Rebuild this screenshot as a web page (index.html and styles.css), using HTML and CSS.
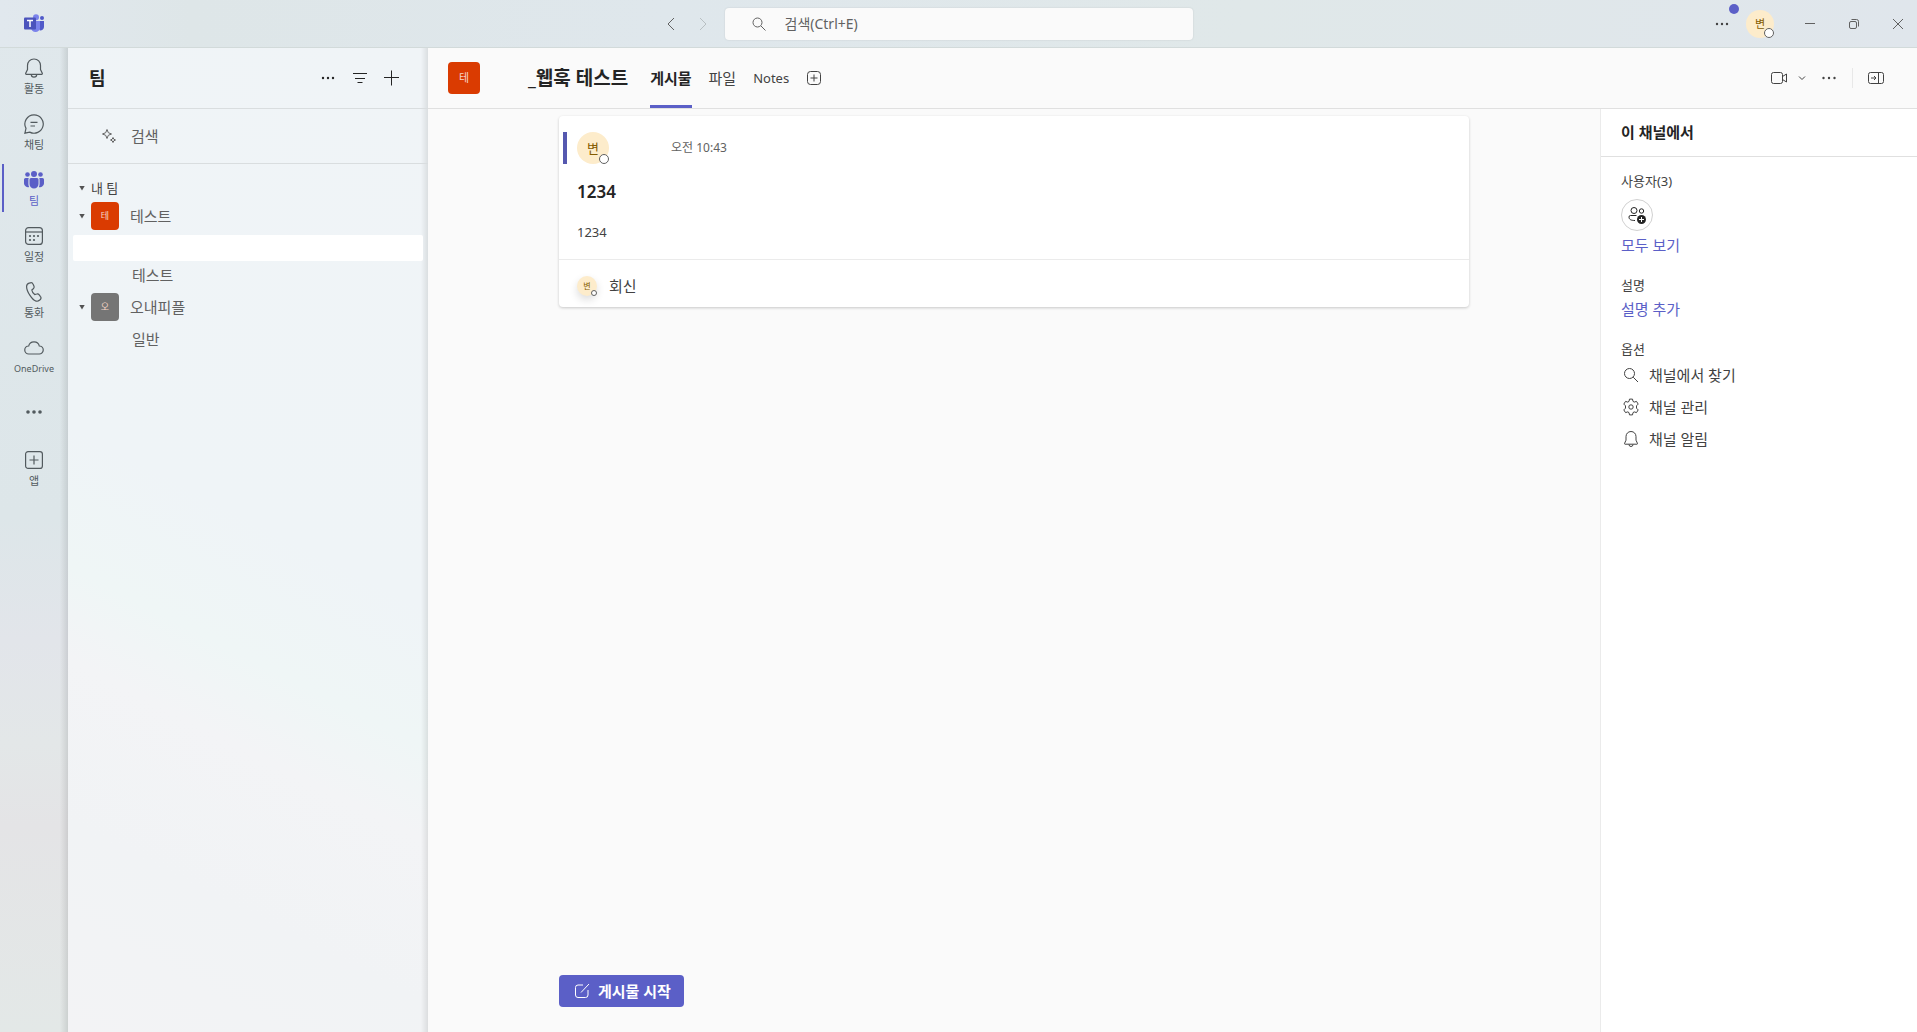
FILE: index.html
```html
<!DOCTYPE html>
<html lang="ko">
<head>
  <meta charset="UTF-8">
  <meta name="viewport" content="width=device-width, initial-scale=1.0">
  <title>_웹훅 테스트</title>
  <link rel="stylesheet" href="styles.css">
</head>
<body>
  <div class="app">
    <header class="titlebar">
      <div class="titlebar-left">
        <svg class="logo" width="20" height="20" viewBox="0 0 20 20">
          <circle cx="18" cy="4" r="2" fill="#5059c9"/>
          <path d="M14 7h6v6a3.500 3.500 0 0 1-4.500 3.300z" fill="#5059c9"/>
          <circle cx="12" cy="3.200" r="3" fill="#7b83eb"/>
          <path d="M7 7h9v6.500a4.500 4.500 0 0 1-9 0z" fill="#7b83eb"/>
          <rect y="3.500" width="12" height="12" rx="1" fill="#4b53bc"/>
          <path d="M3 6.500h6M6 6.500v6.500" stroke="#fff" stroke-width="1.500" fill="none"/>
        </svg>
        <div class="history">
          <button aria-label="뒤로"><svg width="20" height="20" viewBox="0 0 20 20"><path d="M13 4L7 10l6 6"/></svg></button>
          <button aria-label="앞으로" disabled><svg width="20" height="20" viewBox="0 0 20 20"><path d="M7 4l6 6-6 6"/></svg></button>
        </div>
      </div>
      <label class="search">
        <svg width="20" height="20" viewBox="0 0 20 20"><circle cx="8.500" cy="8.500" r="4.500"/><path d="M12 12l4.500 4.500"/></svg>
        <input type="text" placeholder="검색(Ctrl+E)" aria-label="검색">
      </label>
      <div class="titlebar-right">
        <button class="more" aria-label="설정 및 기타">
          <svg class="fill" width="20" height="20" viewBox="0 0 20 20"><circle cx="5" cy="10" r="1.200"/><circle cx="10" cy="10" r="1.200"/><circle cx="15" cy="10" r="1.200"/></svg>
          <span class="dot"></span>
        </button>
        <button class="person person-28" aria-label="프로필">변<span class="presence"></span></button>
        <div class="window-controls">
          <button aria-label="최소화"><svg width="12" height="12" viewBox="0 0 12 12"><path d="M1 5.500h10"/></svg></button>
          <button aria-label="복원"><svg width="12" height="12" viewBox="0 0 12 12"><rect x="1.500" y="3.500" width="7" height="7" rx="1.500"/><path d="M3.500 1.500h5a2 2 0 0 1 2 2v5"/></svg></button>
          <button aria-label="닫기"><svg width="12" height="12" viewBox="0 0 12 12"><path d="M1 1l10 10M11 1L1 11"/></svg></button>
        </div>
      </div>
    </header>

    <div class="body">
      <nav class="rail">
        <a href="#">
          <svg width="20" height="20" viewBox="0 0 20 20"><path d="M10 1C6.100 1 3.500 3.900 3.500 7.500v4L1.700 15.300c-.2.500.1 1 .6 1h15.400c.5 0 .8-.5.6-1L16.500 11.500v-4C16.500 3.900 13.900 1 10 1zM7.300 16.500a2.700 2.700 0 0 0 5.400 0"/></svg>
          <span>활동</span>
        </a>
        <a href="#">
          <svg width="20" height="20" viewBox="0 0 20 20"><path d="M10 .8a9.200 9.200 0 1 1-4.300 17.300L.9 19.200l1.100-4.800A9.200 9.200 0 0 1 10 .8zM6.500 8.300h7M6.500 12h4.500"/></svg>
          <span>채팅</span>
        </a>
        <a href="#" class="active">
          <svg class="fill" width="20" height="20" viewBox="0 0 20 20"><circle cx="10" cy="4" r="3"/><circle cx="3.500" cy="4.500" r="2.300"/><circle cx="16.500" cy="4.500" r="2.300"/><path d="M5.500 9.500A1.500 1.500 0 0 1 7 8h6a1.500 1.500 0 0 1 1.500 1.500V14a4.500 4.500 0 0 1-9 0zM0 9.500A1.500 1.500 0 0 1 1.500 8H4.800c-.3.500-.4 1-.4 1.500V14c0 1.200.3 2.200.8 3A4 4 0 0 1 0 13zM20 9.500A1.500 1.500 0 0 0 18.500 8h-3.300c.3.500.4 1 .4 1.500V14c0 1.200-.3 2.200-.8 3A4 4 0 0 0 20 13z"/></svg>
          <span>팀</span>
        </a>
        <a href="#">
          <svg width="20" height="20" viewBox="0 0 20 20"><rect x="1.600" y="1.600" width="16.800" height="16.800" rx="3"/><path d="M1.600 6h16.800"/><g class="fill"><circle cx="6" cy="10" r="1.100"/><circle cx="10" cy="10" r="1.100"/><circle cx="14" cy="10" r="1.100"/><circle cx="6" cy="14" r="1.100"/><circle cx="10" cy="14" r="1.100"/></g></svg>
          <span>일정</span>
        </a>
        <a href="#">
          <svg width="20" height="20" viewBox="0 0 20 20"><path d="M5.200 1.100l1.200-.3c1.100-.3 2.200.2 2.600 1.200l.9 2.100c.4.900.2 1.900-.6 2.600L7.800 8c.3 1.700 1.400 3.500 2.900 4.600l2-.6c.9-.3 1.900 0 2.500.8l1.300 1.800c.7.900.5 2.100-.2 2.900l-.9.800c-.9.800-2.200 1.100-3.300.8C8.500 18.200 2.500 9.500 2.600 4.500 2.600 2.900 3.600 1.500 5.200 1.100z"/></svg>
          <span>통화</span>
        </a>
        <a href="#">
          <svg width="20" height="20" viewBox="0 0 20 20"><path d="M4.800 16A4 4 0 0 1 4.700 8C5.200 5.300 7.300 3.800 10 3.800s4.800 1.500 5.300 4.200a4 4 0 0 1-.1 8z"/></svg>
          <span class="latin">OneDrive</span>
        </a>
        <button aria-label="더 많은 앱 보기">
          <svg class="fill" width="20" height="20" viewBox="0 0 20 20"><circle cx="4" cy="10" r="1.800"/><circle cx="10" cy="10" r="1.800"/><circle cx="16" cy="10" r="1.800"/></svg>
        </button>
        <a href="#">
          <svg width="20" height="20" viewBox="0 0 20 20"><rect x="1.600" y="1.600" width="16.800" height="16.800" rx="2.500"/><path d="M10 5.500v9M5.500 10h9"/></svg>
          <span>앱</span>
        </a>
      </nav>

      <aside class="teams">
        <div class="teams-header">
          <h1>팀</h1>
          <button aria-label="추가 옵션"><svg class="fill" width="20" height="20" viewBox="0 0 20 20"><circle cx="5" cy="10" r="1.200"/><circle cx="10" cy="10" r="1.200"/><circle cx="15" cy="10" r="1.200"/></svg></button>
          <button aria-label="필터"><svg width="20" height="20" viewBox="0 0 20 20"><path d="M3 5.500h14M5 10.500h10M7.500 14.500h5"/></svg></button>
          <button aria-label="팀 만들기"><svg width="20" height="20" viewBox="0 0 20 20"><path d="M9.500 2.500v15M2 9.500h15"/></svg></button>
        </div>
        <button class="teams-search">
          <svg width="16" height="16" viewBox="0 0 16 16"><path d="M6 1.500l1.300 3.200L10.500 6 7.300 7.300 6 10.500 4.700 7.300 1.500 6l3.200-1.300zM12 9.500l.8 1.700 1.700.8-1.700.8-.8 1.700-.8-1.700-1.700-.8 1.700-.8z"/></svg>
          검색
        </button>
        <div class="tree">
          <button class="group"><span class="caret"></span>내 팀</button>
          <button class="team"><span class="caret"></span><span class="square red">테</span>테스트</button>
          <a href="#" class="channel selected" aria-label="선택한 채널"></a>
          <a href="#" class="channel">테스트</a>
          <button class="team"><span class="caret"></span><span class="square gray">오</span>오내피플</button>
          <a href="#" class="channel">일반</a>
        </div>
      </aside>

      <div class="content">
        <div class="channel-header">
          <span class="square red large">테</span>
          <h2>_웹훅 테스트</h2>
          <nav class="tabs">
            <a href="#" class="current">게시물</a>
            <a href="#">파일</a>
            <a href="#" class="latin">Notes</a>
          </nav>
          <button class="add-tab" aria-label="탭 추가"><svg width="16" height="16" viewBox="0 0 16 16"><rect x="1.500" y="1.500" width="13" height="13" rx="3"/><path d="M8 4.500v7M4.500 8h7"/></svg></button>
          <div class="channel-actions">
            <button aria-label="모임 시작"><svg width="20" height="20" viewBox="0 0 20 20"><rect x="2.500" y="4.500" width="11" height="11" rx="2"/><path d="M13.500 8.500L17.500 6v8l-4-2.500"/></svg></button>
            <button class="narrow" aria-label="모임 옵션"><svg width="8" height="8" viewBox="0 0 8 8"><path d="M1 2.500l3 3 3-3"/></svg></button>
            <button aria-label="추가 옵션"><svg class="fill" width="20" height="20" viewBox="0 0 20 20"><circle cx="4.500" cy="10" r="1.200"/><circle cx="10" cy="10" r="1.200"/><circle cx="15.500" cy="10" r="1.200"/></svg></button>
            <span class="divider"></span>
            <button aria-label="창 닫기"><svg width="20" height="20" viewBox="0 0 20 20"><rect x="2.500" y="4.500" width="15" height="11" rx="2"/><path d="M12.500 4.500v11M5 10h5M8 8l2 2-2 2"/></svg></button>
          </div>
        </div>

        <div class="content-body">
          <main class="feed">
            <article class="post">
              <div class="post-header">
                <span class="person person-32">변<span class="presence"></span></span>
                <time>오전 10:43</time>
              </div>
              <h3>1234</h3>
              <p>1234</p>
              <button class="reply"><span class="person person-20">변<span class="presence"></span></span>회신</button>
            </article>
            <button class="start-post">
              <svg width="16" height="16" viewBox="0 0 16 16"><path d="M9 2H4a2.500 2.500 0 0 0-2.500 2.500V12A2.500 2.500 0 0 0 4 14.500h7.500A2.500 2.500 0 0 0 14 12V7M7 9.500L15 1"/></svg>
              게시물 시작
            </button>
          </main>

          <aside class="info">
            <h2>이 채널에서</h2>
            <section>
              <h3>사용자(3)</h3>
              <button class="add-people" aria-label="구성원 추가">
                <svg width="20" height="20" viewBox="0 0 20 20"><circle cx="7" cy="5.500" r="3"/><circle cx="14.500" cy="6" r="2.200"/><path d="M9.500 10.500H3.500A1.500 1.500 0 0 0 2 12C2 14.500 4 15.500 8 15.500"/><circle class="badge" cx="14.500" cy="14.500" r="4.500"/><path class="badge-plus" d="M14.500 12v5M12 14.500h5"/></svg>
              </button>
              <a href="#">모두 보기</a>
            </section>
            <section>
              <h3>설명</h3>
              <a href="#">설명 추가</a>
            </section>
            <section>
              <h3>옵션</h3>
              <button><svg width="20" height="20" viewBox="0 0 20 20"><circle cx="8.500" cy="8.500" r="5"/><path d="M12.200 12.200L17 17"/></svg>채널에서 찾기</button>
              <button><svg width="20" height="20" viewBox="0 0 20 20"><path d="M8.500 2.100h3l.5 2.300 1.200.7 2.300-.7 1.700 2.700-1.700 1.700v2.400l1.700 1.700-1.700 2.700-2.300-.7-1.200.7-.5 2.300h-3L8 15.600l-1.200-.7-2.300.7-1.700-2.700 1.700-1.700V8.800L2.800 7.100l1.700-2.700 2.300.7L8 4.400z" stroke-linejoin="round"/><circle cx="10" cy="10" r="2.200"/></svg>채널 관리</button>
              <button><svg width="20" height="20" viewBox="0 0 20 20"><path d="M10 2.500C7 2.500 5 4.800 5 7.600v3.600l-1.500 3.300c-.1.400.1.700.5.700h12c.4 0 .6-.3.5-.7L15 11.200V7.600c0-2.800-2-5.100-5-5.100zM8 15.500a2 2 0 0 0 4 0"/></svg>채널 알림</button>
            </section>
          </aside>
        </div>
      </div>
    </div>
  </div>
</body>
</html>
```
FILE: styles.css
```css
* {
  box-sizing: border-box;
}
body {
  margin: 0;
  font-family: "Noto Sans", "Noto Sans CJK KR", sans-serif;
  font-size: 15px;
  line-height: 20px;
  color: #424242;
}
h1, h2, h3, p {
  margin: 0;
}
a {
  color: inherit;
  text-decoration: none;
}
button {
  display: flex;
  align-items: center;
  justify-content: center;
  padding: 0;
  border: none;
  background: none;
  font: inherit;
  color: inherit;
  cursor: pointer;
}
svg {
  flex: none;
  fill: none;
  stroke: currentColor;
}
.logo {
  stroke: none;
}
.fill {
  fill: currentColor;
  stroke: none;
}
.app {
  display: flex;
  flex-direction: column;
  height: 100vh;
  background: linear-gradient(180deg, #e0e8ec 0%, #dde6e9 50%, #e2e5ea 62%, #e3e7e8 72%, #e4e4e6 80%, #e3e8e7 100%);
}

/* title bar */
.titlebar {
  display: grid;
  grid-template-columns: 1fr 468px 1fr;
  flex: none;
  align-items: center;
  height: 48px;
  border-bottom: 1px solid #d2dada;
  background: linear-gradient(90deg, #e1e8ee 0%, #dee6e8 10%, #dfe7ec 35%, #e0e8e9 65%, #e0e6ec 100%);
}
.titlebar-left {
  display: flex;
  align-items: center;
  justify-content: space-between;
  padding: 0 12px 0 24px;
}
.history {
  display: flex;
  gap: 12px;
  color: #616161;
}
.history button:disabled {
  color: #b8bfc2;
}
.search {
  display: flex;
  align-items: center;
  gap: 16px;
  height: 32px;
  padding: 0 24px;
  border-radius: 4px;
  background: #fafafa;
  box-shadow: 0 0 2px rgba(0, 0, 0, 0.12);
  color: #616161;
}
.search input {
  flex: 1;
  padding: 0;
  border: none;
  outline: none;
  background: none;
  font: inherit;
  font-size: 14px;
}
.search input::placeholder {
  color: #616161;
}
.titlebar-right {
  display: flex;
  align-items: center;
  justify-content: flex-end;
}
.more {
  position: relative;
  width: 24px;
  height: 32px;
  margin-right: 12px;
}
.dot {
  position: absolute;
  top: -4px;
  right: -5px;
  width: 10px;
  height: 10px;
  border-radius: 50%;
  background: #5b5fc7;
}
.window-controls {
  display: flex;
  gap: 6px;
  margin-left: 17px;
  color: #616161;
}
.window-controls button {
  width: 38px;
  height: 32px;
}

/* avatars */
.person {
  position: relative;
  display: flex;
  flex: none;
  align-items: center;
  justify-content: center;
  border-radius: 50%;
  background: #fdeccb;
  color: #835b00;
}
.person-28 {
  width: 28px;
  height: 28px;
  font-size: 11px;
}
.person-32 {
  width: 32px;
  height: 32px;
  font-size: 13px;
}
.person-20 {
  width: 20px;
  height: 20px;
  font-size: 8px;
  box-shadow: 0 4px 8px rgba(0, 0, 0, 0.14);
}
.presence {
  position: absolute;
  right: 0;
  bottom: 0;
  width: 10px;
  height: 10px;
  border: 1px solid #616161;
  border-radius: 50%;
  background: #fff;
}
.person-20 .presence {
  width: 6px;
  height: 6px;
}
.square {
  display: flex;
  flex: none;
  align-items: center;
  justify-content: center;
  width: 28px;
  height: 28px;
  border-radius: 4px;
  color: #f6d5c8;
  font-size: 9px;
}
.square.large {
  width: 32px;
  height: 32px;
  font-size: 11px;
}
.red {
  background: #da3b01;
}
.gray {
  background: #757575;
}

/* app rail */
.body {
  display: flex;
  flex: 1;
  min-height: 0;
}
.rail {
  display: flex;
  flex: none;
  flex-direction: column;
  width: 68px;
  background: linear-gradient(90deg, transparent 88%, rgba(0, 0, 0, 0.1) 100%);
  color: #525a5e;
}
.rail a, .rail button {
  display: flex;
  flex: none;
  flex-direction: column;
  align-items: center;
  gap: 3px;
  height: 56px;
  padding-top: 10px;
  font-size: 11px;
  line-height: 16px;
}
.rail button {
  justify-content: center;
  padding: 0;
}
.rail a svg {
  stroke-width: 1.2px;
}
.rail a .fill {
  stroke-width: 0;
}
.rail .latin {
  font-size: 9px;
}
.rail .active {
  color: #5b5fc7;
  background: linear-gradient(#5b5fc7, #5b5fc7) no-repeat 2px 4px / 2px 48px;
}

/* team list */
.teams {
  display: flex;
  flex: none;
  flex-direction: column;
  width: 360px;
  background:
    linear-gradient(90deg, transparent 98%, rgba(0, 0, 0, 0.09) 100%),
    linear-gradient(207deg, #f0f4f7 0%, #eff4f7 48%, #eff6f6 60%, #f3f4f6 68%, #f1f3f5 82%, #f3f3f5 100%);
  color: #616161;
}
.teams-header {
  display: flex;
  align-items: center;
  height: 61px;
  padding: 0 20px 0 21px;
  border-bottom: 1px solid #d9dddf;
  color: #242424;
}
.teams-header h1 {
  flex: 1;
  font-size: 18px;
  line-height: 24px;
}
.teams-header button {
  width: 32px;
  height: 32px;
}
.teams-search {
  justify-content: flex-start;
  gap: 14px;
  height: 55px;
  padding-left: 33px;
  border-bottom: 1px solid #d9dddf;
}
.tree {
  display: flex;
  flex-direction: column;
  padding: 14px 5px;
}
.group, .team {
  justify-content: flex-start;
  height: 36px;
  padding-left: 6px;
}
.group {
  height: 20px;
  font-size: 13px;
  color: #424242;
}
.caret {
  width: 6px;
  height: 5px;
  margin-right: 6px;
  background: #525252;
  clip-path: polygon(0 0, 100% 0, 50% 100%);
}
.team .square {
  margin-right: 11px;
}
.channel {
  height: 28px;
  padding-left: 59px;
  line-height: 28px;
}
.channel.selected {
  height: 26px;
  margin-top: 1px;
  border-radius: 2px;
  background: #fff;
}

/* channel */
.content {
  display: flex;
  flex: 1;
  flex-direction: column;
  min-width: 0;
  background: #fafafa;
}
.channel-header {
  display: flex;
  flex: none;
  align-items: center;
  height: 61px;
  padding: 0 25px 0 20px;
  border-bottom: 1px solid #e0e0e0;
}
.channel-header h2 {
  margin: 0 22px 0 48px;
  color: #242424;
  font-size: 19px;
  line-height: 24px;
}
.tabs {
  display: flex;
  align-self: stretch;
  gap: 17px;
}
.tabs a {
  line-height: 60px;
}
.tabs .current {
  border-bottom: 3px solid #5b5fc7;
  color: #242424;
  font-weight: 700;
}
.tabs .latin {
  font-size: 13px;
}
.add-tab {
  margin-left: 17px;
}
.channel-actions {
  display: flex;
  align-items: center;
  margin-left: auto;
}
.channel-actions button {
  width: 32px;
  height: 32px;
}
.channel-actions .narrow {
  width: 14px;
  margin-right: 4px;
}
.channel-actions .divider {
  width: 1px;
  height: 20px;
  margin: 0 7px;
  background: #e8e8e8;
}
.content-body {
  display: flex;
  flex: 1;
  min-height: 0;
}
.feed {
  display: flex;
  flex: 1;
  flex-direction: column;
  justify-content: space-between;
  max-width: 910px;
  margin: 0 auto;
  padding: 7px 0 25px;
}
.post {
  border-radius: 4px;
  background: #fff;
  box-shadow: 0 1px 3px rgba(0, 0, 0, 0.2);
}
.post-header {
  display: flex;
  align-items: center;
  gap: 62px;
  margin: 16px 4px 0;
  padding-left: 10px;
  border-left: 4px solid #5558af;
}
.post time {
  color: #616161;
  font-size: 12px;
}
.post h3 {
  margin: 16px 18px 0;
  color: #242424;
  font-size: 17px;
  font-weight: 600;
  line-height: 24px;
}
.post p {
  margin: 18px 18px 17px;
  font-size: 13px;
}
.reply {
  justify-content: flex-start;
  gap: 12px;
  width: 100%;
  height: 48px;
  padding: 4px 18px 0;
  border-top: 1px solid #ebebeb;
}
.start-post {
  align-self: flex-start;
  gap: 8px;
  height: 32px;
  padding: 0 13px 0 15px;
  border-radius: 4px;
  background: #5b5fc7;
  color: #fff;
  font-weight: 700;
}

/* channel info */
.info {
  flex: none;
  width: 317px;
  border-left: 1px solid #ebebeb;
  background: #fff;
}
.info h2 {
  height: 48px;
  padding-left: 20px;
  border-bottom: 1px solid #e0e0e0;
  color: #242424;
  font-size: 15px;
  line-height: 47px;
}
.info section {
  display: flex;
  flex-direction: column;
  align-items: flex-start;
  padding: 14px 20px 2px;
}
.info section h3 {
  font-size: 13px;
  font-weight: 400;
}
.info section a {
  padding: 4px 0;
  color: #5b5fc7;
}
.info section button {
  gap: 8px;
  height: 32px;
}
.info .add-people {
  width: 32px;
  margin: 8px 0 0;
  border: 1px solid #d1d1d1;
  border-radius: 50%;
  color: #242424;
}
.badge {
  fill: #242424;
  stroke: none;
}
.badge-plus {
  stroke: #fff;
}
```
